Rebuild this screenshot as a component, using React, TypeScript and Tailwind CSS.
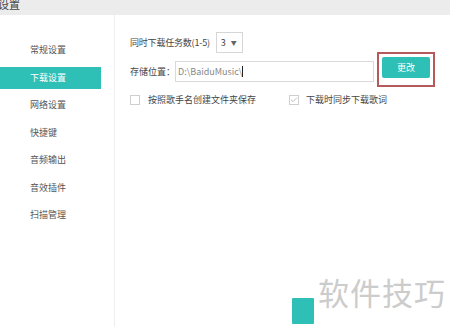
import { Check } from 'lucide-react';

const menu = ['常规设置', '下载设置', '网络设置', '快捷键', '音频输出', '音效插件', '扫描管理'];

export default function App() {
  return (
    <div
      className="relative w-[450px] h-[327px] overflow-hidden bg-white text-[#333]"
      style={{ fontFamily: '"Noto Sans CJK SC", "Liberation Sans", sans-serif' }}
    >
      {/* title bar */}
      <div className="h-[17px] bg-[#ececec] text-[11px] leading-[12px] text-[#444] -ml-[2px] -mt-[2px]">设置</div>

      <div className="flex h-[312px]">
        {/* sidebar */}
        <div className="w-[115px] border-r border-[#eeeeee] pt-[24px] pr-[13px]">
          {menu.map((m, i) => (
            <div
              key={m}
              className={
                'h-[22px] mb-[5.5px] pl-[30px] text-[9px] leading-[22px] ' +
                (i === 1 ? 'bg-[#2ec0b6] text-white' : 'text-[#555]')
              }
            >
              {m}
            </div>
          ))}
        </div>

        {/* content */}
        <div className="flex-1 pl-[15px] pt-[17px] text-[9px] text-[#444]">
          <div className="flex items-center h-[21px]">
            <span className="tracking-[-0.2px]">同时下载任务数(1-5)</span>
            <div className="ml-[6px] w-[27px] h-[21px] border border-[#d6d6d6] flex items-center pl-[4px] gap-[5px]">
              <span className="text-[9px]">3</span>
              <span className="text-[6px] text-[#666]">▼</span>
            </div>
          </div>

          <div className="flex items-center mt-[8px]">
            <span>存储位置：</span>
            <div className="w-[199px] h-[21px] border border-[#d9d9d9] flex items-center pl-[2px] text-[#888]">
              D:\BaiduMusic\<span className="w-px h-[11px] bg-[#222]" />
            </div>
            <div className="ml-[3px] border-[2px] border-[#b5595a] px-[3px] pt-[3px] pb-[7px] -mt-[10px] -mb-[6px]">
              <div className="w-[48px] h-[21px] rounded-[2px] bg-[#2ec0b6] text-white text-[9px] flex items-center justify-center">
                更改
              </div>
            </div>
          </div>

          <div className="flex items-center mt-[11px]">
            <span className="w-[10px] h-[10px] border border-[#cfcfcf] mr-[8px]" />
            <span className="w-[141px]">按照歌手名创建文件夹保存</span>
            <span className="w-[10px] h-[10px] border border-[#cfcfcf] mr-[7px] flex items-center justify-center">
              <Check className="w-[8px] h-[8px] text-[#9c9c9c]" strokeWidth={2} />
            </span>
            <span>下载时同步下载歌词</span>
          </div>
        </div>
      </div>

      {/* bottom button partly visible */}
      <div className="absolute left-[292px] top-[298px] w-[22px] h-[26px] bg-[#2ec0b6] rounded-[1px]" />
      {/* watermark */}
      <div className="absolute left-[318px] top-[274px] text-[31px] leading-[36px] text-[#cccccc] tracking-[1px]">
        软件技巧
      </div>
    </div>
  );
}
